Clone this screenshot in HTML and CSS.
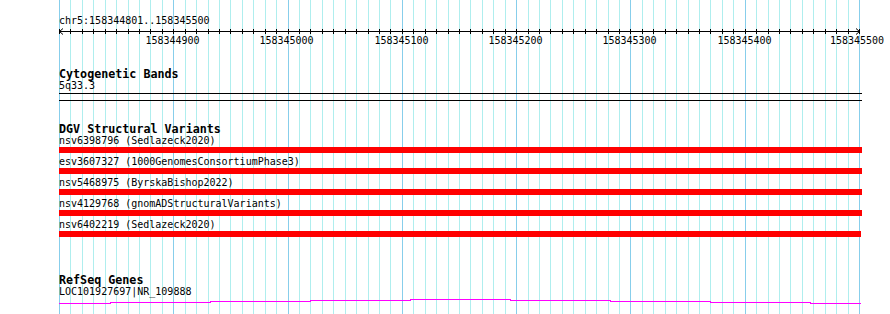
FILE: index.html
```html
<!DOCTYPE html>
<html lang="en">
<head>
<meta charset="utf-8">
<title>Genome browser</title>
<link rel="stylesheet" href="styles.css">
</head>
<body>
<div class="browser">
  <svg class="grid" width="890" height="314" viewBox="0 0 890 314">
    <path class="grid-minor" d="M70.5 0V314M82.5 0V314M93.5 0V314M105.5 0V314M116.5 0V314M128.5 0V314M139.5 0V314M150.5 0V314M162.5 0V314M185.5 0V314M196.5 0V314M208.5 0V314M219.5 0V314M230.5 0V314M242.5 0V314M253.5 0V314M265.5 0V314M276.5 0V314M299.5 0V314M310.5 0V314M322.5 0V314M333.5 0V314M345.5 0V314M356.5 0V314M368.5 0V314M379.5 0V314M390.5 0V314M413.5 0V314M425.5 0V314M436.5 0V314M448.5 0V314M459.5 0V314M470.5 0V314M482.5 0V314M493.5 0V314M505.5 0V314M528.5 0V314M539.5 0V314M550.5 0V314M562.5 0V314M573.5 0V314M585.5 0V314M596.5 0V314M608.5 0V314M619.5 0V314M642.5 0V314M653.5 0V314M665.5 0V314M676.5 0V314M688.5 0V314M699.5 0V314M710.5 0V314M722.5 0V314M733.5 0V314M756.5 0V314M768.5 0V314M779.5 0V314M790.5 0V314M802.5 0V314M813.5 0V314M825.5 0V314M836.5 0V314M848.5 0V314"/>
    <path class="grid-major" d="M59.5 0V314M173.5 0V314M288.5 0V314M402.5 0V314M516.5 0V314M630.5 0V314M745.5 0V314M859.5 0V314"/>
  </svg>

  <div class="tracks">
    <div class="locus">chr5:158344801..158345500</div>

    <svg class="ruler" width="890" height="20" viewBox="0 0 890 20">
      <path class="ruler-line" d="M60 4.5H860M63 1.5L59.5 4.5L63 7.5M856 1.5L859.5 4.5L856 7.5"/>
      <path class="ruler-ticks" d="M59.5 2V7M70.5 2V7M82.5 2V7M93.5 2V7M105.5 2V7M116.5 2V7M128.5 2V7M139.5 2V7M150.5 2V7M162.5 2V7M173.5 2V7M185.5 2V7M196.5 2V7M208.5 2V7M219.5 2V7M230.5 2V7M242.5 2V7M253.5 2V7M265.5 2V7M276.5 2V7M288.5 2V7M299.5 2V7M310.5 2V7M322.5 2V7M333.5 2V7M345.5 2V7M356.5 2V7M368.5 2V7M379.5 2V7M390.5 2V7M402.5 2V7M413.5 2V7M425.5 2V7M436.5 2V7M448.5 2V7M459.5 2V7M470.5 2V7M482.5 2V7M493.5 2V7M505.5 2V7M516.5 2V7M528.5 2V7M539.5 2V7M550.5 2V7M562.5 2V7M573.5 2V7M585.5 2V7M596.5 2V7M608.5 2V7M619.5 2V7M630.5 2V7M642.5 2V7M653.5 2V7M665.5 2V7M676.5 2V7M688.5 2V7M699.5 2V7M710.5 2V7M722.5 2V7M733.5 2V7M745.5 2V7M756.5 2V7M768.5 2V7M779.5 2V7M790.5 2V7M802.5 2V7M813.5 2V7M825.5 2V7M836.5 2V7M848.5 2V7M859.5 2V7"/>
      <text class="ruler-label" x="172.5" y="17">158344900</text>
      <text class="ruler-label" x="286.5" y="17">158345000</text>
      <text class="ruler-label" x="401.5" y="17">158345100</text>
      <text class="ruler-label" x="515.5" y="17">158345200</text>
      <text class="ruler-label" x="629.5" y="17">158345300</text>
      <text class="ruler-label" x="744.5" y="17">158345400</text>
      <text class="ruler-label" x="857" y="17">158345500</text>
    </svg>

    <section class="track track-cyto">
      <div class="track-label">Cytogenetic Bands</div>
      <div class="feature-name">5q33.3</div>
      <div class="cytoband"></div>
    </section>

    <section class="track track-dgv">
      <div class="track-label">DGV Structural Variants</div>
      <div class="features">
        <div class="feature">
          <div class="feature-name">nsv6398796 (Sedlazeck2020)</div>
          <div class="sv-bar"></div>
        </div>
        <div class="feature">
          <div class="feature-name">esv3607327 (1000GenomesConsortiumPhase3)</div>
          <div class="sv-bar"></div>
        </div>
        <div class="feature">
          <div class="feature-name">nsv5468975 (ByrskaBishop2022)</div>
          <div class="sv-bar"></div>
        </div>
        <div class="feature">
          <div class="feature-name">nsv4129768 (gnomADStructuralVariants)</div>
          <div class="sv-bar"></div>
        </div>
        <div class="feature">
          <div class="feature-name">nsv6402219 (Sedlazeck2020)</div>
          <div class="sv-bar" style="width:802px"></div>
        </div>
      </div>
    </section>

    <section class="track track-refseq">
      <div class="track-label">RefSeq Genes</div>
      <div class="feature-name">LOC101927697|NR_109888</div>
      <svg class="gene" width="890" height="8" viewBox="0 0 890 8">
        <path class="gene-line" d="M59 5.5H110V4.5H210V3.5H310V2.5H410V1.5H510V2.5H610V3.5H710V4.5H810V5.5H861"/>
      </svg>
    </section>
  </div>
</div>
</body>
</html>
```

FILE: styles.css
```css
html, body {
  margin: 0;
  padding: 0;
  background: #ffffff;
}

.browser {
  position: relative;
  width: 890px;
  height: 314px;
  overflow: hidden;
  background: #ffffff;
  font-family: "DejaVu Sans Mono", "Liberation Mono", monospace;
  color: #000000;
}

.grid {
  position: absolute;
  top: 0;
  left: 0;
  display: block;
}

.grid-minor {
  stroke: #afeeee;
  stroke-width: 1;
  fill: none;
  shape-rendering: crispEdges;
}

.grid-major {
  stroke: #87ceeb;
  stroke-width: 1;
  fill: none;
  shape-rendering: crispEdges;
}

.tracks {
  position: relative;
  padding-top: 15px;
}

.locus {
  margin-left: 59px;
  font-size: 10px;
  line-height: 12px;
  white-space: nowrap;
}

.ruler {
  display: block;
}

.ruler-line {
  stroke: #000000;
  stroke-width: 1;
  fill: none;
}

.ruler-ticks {
  stroke: #000000;
  stroke-width: 1;
  fill: none;
  shape-rendering: crispEdges;
}

.ruler-label {
  font-family: "DejaVu Sans Mono", "Liberation Mono", monospace;
  font-size: 10px;
  text-anchor: middle;
  fill: #000000;
}

.track-label {
  margin-left: 59px;
  font-size: 11.7px;
  font-weight: bold;
  line-height: 12px;
  white-space: nowrap;
}

.feature-name {
  margin-left: 59px;
  font-size: 10px;
  line-height: 12px;
  white-space: nowrap;
}

.track-cyto {
  margin-top: 21px;
}

.cytoband {
  margin: 1px 0 0 59px;
  width: 803px;
  height: 6px;
  border-top: 1px solid #000000;
  border-bottom: 1px solid #000000;
}

.track-dgv {
  margin-top: 22px;
}

.features {
  display: flex;
  flex-direction: column;
  gap: 3px;
}

.sv-bar {
  margin-left: 59px;
  width: 803px;
  height: 6px;
  background: #ff0000;
}

.track-refseq {
  margin-top: 37px;
}

.gene {
  display: block;
}

.gene-line {
  stroke: #ff00ff;
  stroke-width: 1;
  fill: none;
  shape-rendering: crispEdges;
}
```
